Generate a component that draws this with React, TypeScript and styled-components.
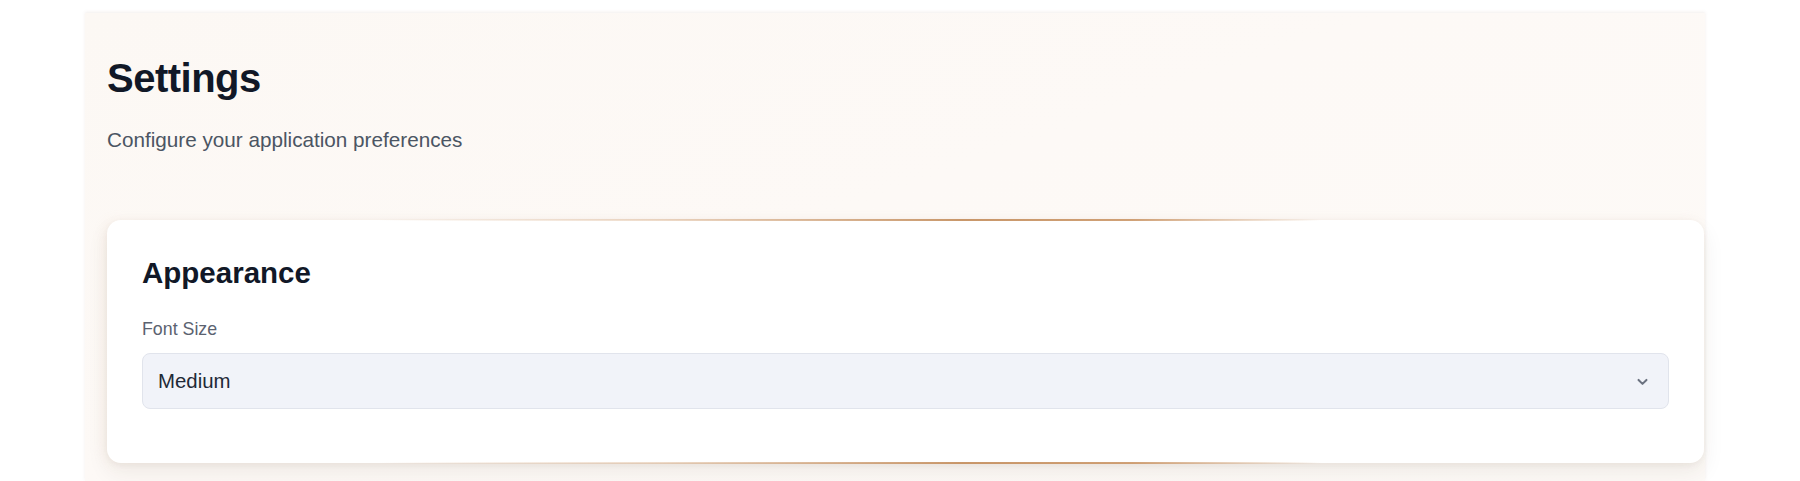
import React from "react";
import styled, { createGlobalStyle } from "styled-components";

const GlobalStyle = createGlobalStyle`
  html, body {
    margin: 0;
    padding: 0;
    background: #ffffff;
  }
  body {
    font-family: "Liberation Sans", Arial, sans-serif;
    -webkit-font-smoothing: antialiased;
  }
  * { box-sizing: border-box; }
`;

const Page = styled.div`
  display: flex;
  padding-top: 13px;
  padding-left: 85px;
  min-height: 481px;
`;

const Panel = styled.main`
  width: 1620px;
  min-height: 468px;
  padding: 41px 1px 0 22px;
  background: linear-gradient(160deg, #fcf8f4 0%, #fdf9f6 45%, #fdfaf7 100%);
  box-shadow: 0 -1px 3px rgba(160, 120, 110, 0.12);
  display: flex;
  flex-direction: column;
`;

const Title = styled.h1`
  margin: 0;
  font-size: 40px;
  line-height: 48px;
  font-weight: 700;
  letter-spacing: -0.5px;
  color: #111827;
`;

const Subtitle = styled.p`
  margin: 24px 0 0 0;
  font-size: 20.7px;
  line-height: 28px;
  color: #4b5563;
`;

const Card = styled.section`
  position: relative;
  margin-top: 66px;
  background: #ffffff;
  border-radius: 14px;
  padding: 35px 35px 54px 35px;
  box-shadow: 0 10px 22px rgba(60, 40, 30, 0.07), 0 2px 6px rgba(60, 40, 30, 0.04),
    -4px 0 12px rgba(230, 200, 170, 0.12);

  &::before,
  &::after {
    content: "";
    position: absolute;
    left: 17%;
    right: 24%;
    height: 2px;
    background: linear-gradient(
      90deg,
      rgba(205, 150, 100, 0) 0%,
      rgba(205, 150, 100, 0.35) 30%,
      rgba(195, 140, 90, 0.9) 62%,
      rgba(200, 145, 95, 0.85) 80%,
      rgba(205, 150, 100, 0) 100%
    );
  }
  &::before { top: -1px; }
  &::after { bottom: -1px; }
`;

const CardTitle = styled.h2`
  margin: 0;
  font-size: 29.5px;
  line-height: 36px;
  font-weight: 700;
  color: #111827;
`;

const Field = styled.div`
  margin-top: 26px;
  display: flex;
  flex-direction: column;
  gap: 12px;
`;

const Label = styled.label`
  font-size: 17.8px;
  line-height: 24px;
  color: #5b6270;
`;

const SelectBox = styled.div`
  height: 56px;
  display: flex;
  align-items: center;
  justify-content: space-between;
  padding: 0 16px 0 15px;
  background: #f1f3f9;
  border: 1px solid #e1e4ec;
  border-radius: 8px;
`;

const SelectValue = styled.span`
  font-size: 20.4px;
  line-height: 24px;
  color: #1f2937;
`;

const Chevron = styled.svg`
  width: 19px;
  height: 19px;
  color: #6b7280;
`;

export default function App() {
  return (
    <>
      <GlobalStyle />
      <Page>
        <Panel>
          <Title>Settings</Title>
          <Subtitle>Configure your application preferences</Subtitle>
          <Card>
            <CardTitle>Appearance</CardTitle>
            <Field>
              <Label>Font Size</Label>
              <SelectBox>
                <SelectValue>Medium</SelectValue>
                <Chevron viewBox="0 0 24 24" fill="none" stroke="currentColor" strokeWidth={2.6} strokeLinecap="round" strokeLinejoin="round">
                  <polyline points="7 10 12 15 17 10" />
                </Chevron>
              </SelectBox>
            </Field>
          </Card>
        </Panel>
      </Page>
    </>
  );
}
